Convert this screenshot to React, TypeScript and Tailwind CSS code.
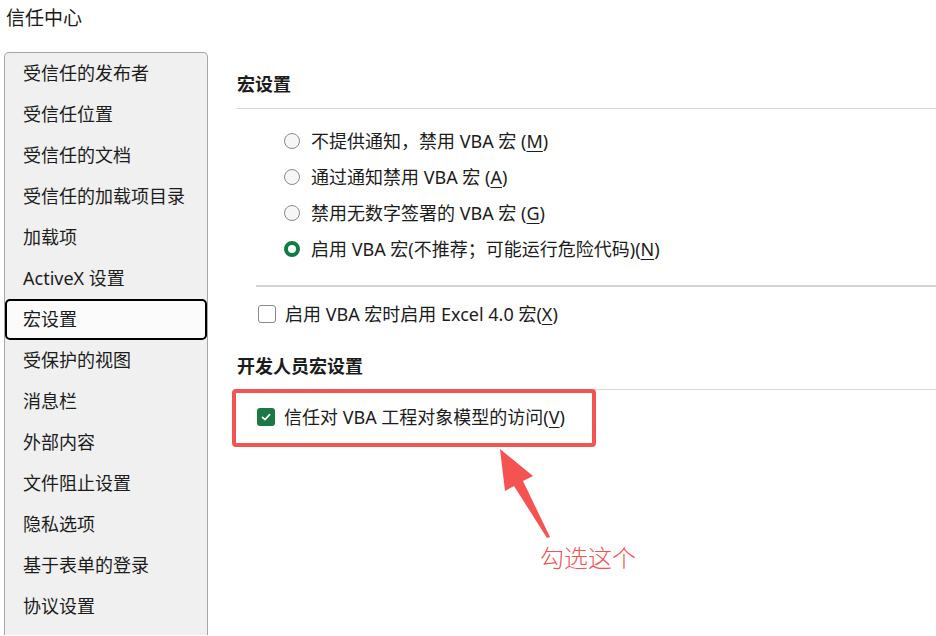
import React from 'react';

const navItems = [
  '受信任的发布者',
  '受信任位置',
  '受信任的文档',
  '受信任的加载项目录',
  '加载项',
  'ActiveX 设置',
  '宏设置',
  '受保护的视图',
  '消息栏',
  '外部内容',
  '文件阻止设置',
  '隐私选项',
  '基于表单的登录',
  '协议设置',
];

const macroOptions = [
  { label: '不提供通知，禁用 VBA 宏 (', key: 'M', tail: ')' },
  { label: '通过通知禁用 VBA 宏 (', key: 'A', tail: ')' },
  { label: '禁用无数字签署的 VBA 宏 (', key: 'G', tail: ')' },
  { label: '启用 VBA 宏(不推荐；可能运行危险代码)(', key: 'N', tail: ')' },
];

function Radio({ checked }: { checked: boolean }) {
  if (checked) {
    return <span className="block w-[16px] h-[16px] rounded-full border-[4px] border-[#107c41] bg-white shrink-0" />;
  }
  return <span className="block w-[16px] h-[16px] rounded-full border-[1.5px] border-[#8a8a8a] bg-[#f6f6f6] shrink-0" />;
}

function CheckBox({ checked }: { checked: boolean }) {
  if (checked) {
    return (
      <span className="w-[18px] h-[18px] rounded-[3px] bg-[#1b7a44] flex items-center justify-center shrink-0">
        <svg width="12" height="12" viewBox="0 0 12 12" fill="none">
          <path d="M2.5 6.3 L5 8.6 L9.6 3.6" stroke="white" strokeWidth="1.6" strokeLinecap="round" strokeLinejoin="round" />
        </svg>
      </span>
    );
  }
  return <span className="block w-[18px] h-[18px] rounded-[3px] border-[1.5px] border-[#8a8a8a] bg-white shrink-0" />;
}

export default function App() {
  return (
    <div
      className="relative w-[936px] h-[636px] bg-white overflow-hidden text-[#1c1c1c]"
      style={{ fontFamily: '"Noto Sans", "Noto Sans CJK SC", sans-serif' }}
    >
      <div className="h-[53px] pl-[6px]">
        <div className="leading-[36px] text-[19px]">信任中心</div>
      </div>

      <div className="flex">
        <div className="ml-[4px] w-[204px] h-[583px] border border-b-0 border-[#a6a6a6] rounded-t-[5px] bg-[#f0f0f0] shrink-0 -mt-px">
          {navItems.map((item) =>
            item === '宏设置' ? (
              <div
                key={item}
                className="h-[41px] flex items-center pl-[16px] border-2 border-black rounded-[5px] bg-[#fbfbfb] text-[18px]"
              >
                {item}
              </div>
            ) : (
              <div key={item} className="h-[41px] flex items-center pl-[18px] text-[18px]">
                {item}
              </div>
            )
          )}
        </div>

        <div className="flex-1 pl-[29px] pt-[19px]">
          <div className="h-[24px] leading-[24px] text-[18px] font-bold">宏设置</div>
          <div className="mt-[12px] h-px bg-[#d6d6d6]" />

          <div className="mt-[14px] pl-[47px]">
            {macroOptions.map((o, i) => (
              <div key={o.key} className="h-[36px] flex items-center gap-[11px] text-[18px]">
                <Radio checked={i === 3} />
                <span>
                  {o.label}
                  <span className="underline underline-offset-[3px]">{o.key}</span>
                  {o.tail}
                </span>
              </div>
            ))}
          </div>

          <div className="mt-[18px] ml-[19px] h-[2px] bg-[#d4d4d4]" />

          <div className="mt-[9px] ml-[21px] h-[36px] flex items-center gap-[9px] text-[18px]">
            <CheckBox checked={false} />
            <span>
              启用 VBA 宏时启用 Excel 4.0 宏(<span className="underline underline-offset-[3px]">X</span>)
            </span>
          </div>

          <div className="mt-[22px] h-[24px] leading-[24px] text-[18px] font-bold">开发人员宏设置</div>
          <div className="mt-[11px] h-px bg-[#d6d6d6]" />

          <div className="mt-[9px] ml-[20px] h-[36px] flex items-center gap-[9px] text-[18px]">
            <CheckBox checked={true} />
            <span>
              信任对 VBA 工程对象模型的访问(<span className="underline underline-offset-[3px]">V</span>)
            </span>
          </div>
        </div>
      </div>

      {/* annotation overlay */}
      <div className="absolute left-[232px] top-[389px] w-[364px] h-[58px] border-[4px] border-[#f55252] rounded-[4px]" />
      <svg className="absolute left-0 top-0" width="936" height="636" viewBox="0 0 936 636">
        <polygon
          points="500,449 533,476 523,481 550,537 547,538 514,486 505,491"
          fill="#f55252"
        />
      </svg>
      <div
        className="absolute left-[540px] top-[542px] text-[24px] leading-[30px] text-[#f55252] font-light"
        style={{ fontFamily: '"Noto Sans CJK SC", sans-serif' }}
      >
        勾选这个
      </div>
    </div>
  );
}
